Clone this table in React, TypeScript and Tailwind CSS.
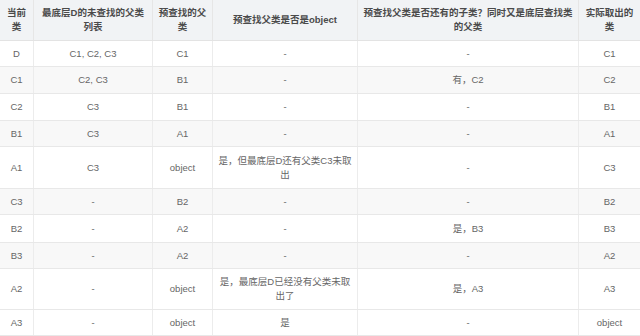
import React from "react";

type Row = { cells: React.ReactNode[]; h: string; striped?: boolean };

const COLS = "grid-cols-[34px_119px_60px_145px_221px_61px]";

const HEAD: React.ReactNode[] = [
  <>当前<br />类</>,
  <>最底层D的未查找的父类<br />列表</>,
  <>预查找的父<br />类</>,
  <>预查找父类是否是object</>,
  <>预查找父类是否还有的子类？同时又是底层查找类<br />的父类</>,
  <>实际取出的<br />类</>,
];

const ROWS: Row[] = [
  { h: "h-[26px]", cells: ["D", "C1, C2, C3", "C1", "-", "-", "C1"] },
  { h: "h-[27px]", striped: true, cells: ["C1", "C2, C3", "B1", "-", "有，C2", "C2"] },
  { h: "h-[27px]", cells: ["C2", "C3", "B1", "-", "-", "B1"] },
  { h: "h-[26px]", striped: true, cells: ["B1", "C3", "A1", "-", "-", "A1"] },
  {
    h: "h-[42px]",
    cells: ["A1", "C3", "object", <>是，但最底层D还有父类C3未取<br />出</>, "-", "C3"],
  },
  { h: "h-[26px]", striped: true, cells: ["C3", "-", "B2", "-", "-", "B2"] },
  { h: "h-[28px]", cells: ["B2", "-", "A2", "-", "是，B3", "B3"] },
  { h: "h-[26px]", striped: true, cells: ["B3", "-", "A2", "-", "-", "A2"] },
  {
    h: "h-[41px]",
    cells: ["A2", "-", "object", <>是，最底层D已经没有父类未取<br />出了</>, "是，A3", "A3"],
  },
  { h: "h-[26px]", cells: ["A3", "-", "object", "是", "-", "object"] },
];

export default function App() {
  return (
    <div className="w-[640px] h-[336px] overflow-hidden bg-white font-['Liberation_Sans','Noto_Sans_CJK_SC',sans-serif] text-[9.5px] leading-[14px] text-[#666]">
      <div className={`grid ${COLS} h-[41px] bg-[#f1f3f5] border-b border-[#e3e3e3] font-bold text-[#4a4a4a]`}>
        {HEAD.map((c, i) => (
          <div
            key={i}
            className="flex items-center justify-center text-center whitespace-nowrap border-r border-[#e6e6e6] last:border-r-0"
          >
            <span>{c}</span>
          </div>
        ))}
      </div>
      {ROWS.map((r, ri) => (
        <div
          key={ri}
          className={`grid ${COLS} ${r.h} border-b border-[#e8e8e8] ${r.striped ? "bg-[#f8f8f8]" : "bg-white"}`}
        >
          {r.cells.map((c, i) => (
            <div
              key={i}
              className="flex items-center justify-center text-center whitespace-nowrap border-r border-[#ececec] last:border-r-0"
            >
              <span>{c}</span>
            </div>
          ))}
        </div>
      ))}
    </div>
  );
}
